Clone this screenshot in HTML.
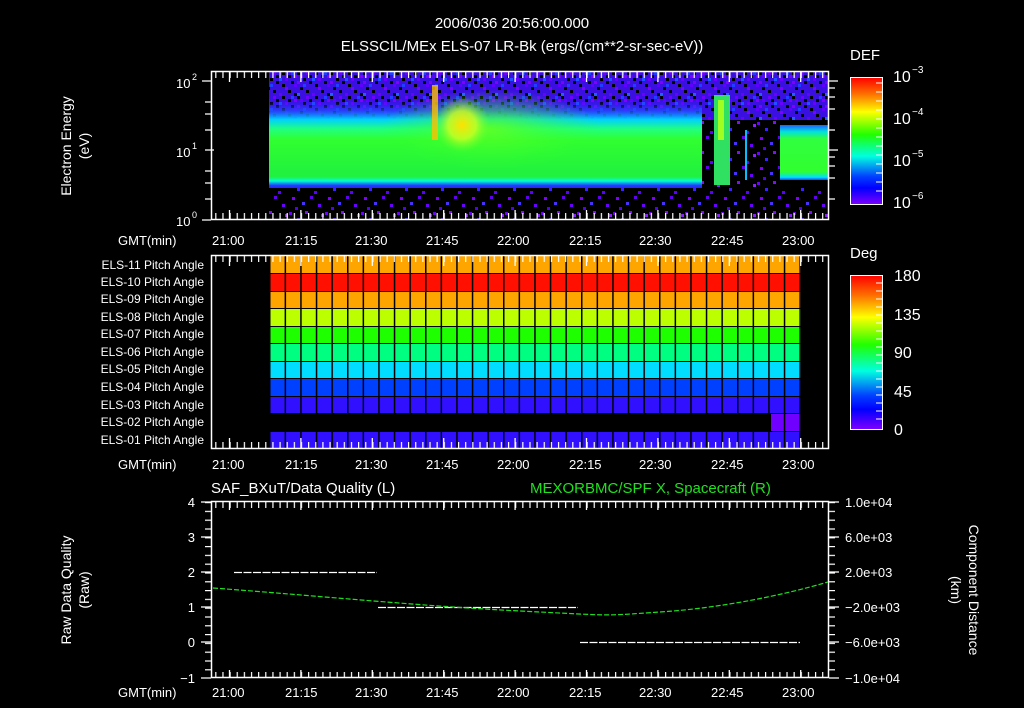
<!DOCTYPE html>
<html><head><meta charset="utf-8"><style>
html,body{margin:0;padding:0;background:#000;width:1024px;height:708px;overflow:hidden}
svg{display:block}
text{font-family:"Liberation Sans",sans-serif;fill:#fff}
</style></head><body>
<svg width="1024" height="708" viewBox="0 0 1024 708" xmlns="http://www.w3.org/2000/svg">
<defs>
<pattern id="tkx" x="229.5" y="0" width="7.14" height="708" patternUnits="userSpaceOnUse"><rect x="0" y="0" width="1.2" height="708" fill="#fff"/></pattern>
<pattern id="tky" x="0" y="502" width="20" height="8.8" patternUnits="userSpaceOnUse"><rect x="0" y="0" width="20" height="1.2" fill="#fff"/></pattern>
<pattern id="cell" x="269" y="0" width="15.6" height="20" patternUnits="userSpaceOnUse"><rect x="0" y="0" width="1.5" height="20" fill="#000"/></pattern>
<pattern id="spk" x="0" y="0" width="36" height="30" patternUnits="userSpaceOnUse">
<rect x="1" y="2" width="3" height="3" fill="#6a00ff"/><rect x="9" y="8" width="3" height="3" fill="#3c20ff"/><rect x="17" y="1" width="3" height="3" fill="#7a10ff"/><rect x="26" y="11" width="3" height="3" fill="#5a00ff"/><rect x="4" y="17" width="3" height="3" fill="#8000ff"/><rect x="14" y="22" width="3" height="3" fill="#4a30ff"/><rect x="30" y="24" width="3" height="3" fill="#6a00ff"/><rect x="22" y="16" width="3" height="3" fill="#6000ee"/><rect x="33" y="4" width="3" height="3" fill="#8a20ff"/><rect x="7" y="27" width="3" height="3" fill="#5000ff"/>
</pattern>
<pattern id="dense" x="0" y="0" width="33" height="24" patternUnits="userSpaceOnUse">
<rect width="33" height="24" fill="#3a10e0"/>
<rect x="0" y="0" width="3" height="3" fill="#000"/><rect x="9" y="0" width="3" height="3" fill="#7000ff"/><rect x="18" y="0" width="3" height="3" fill="#000"/><rect x="27" y="0" width="3" height="3" fill="#2040ff"/>
<rect x="3" y="3" width="3" height="3" fill="#6000ff"/><rect x="12" y="3" width="3" height="3" fill="#000"/><rect x="24" y="3" width="3" height="3" fill="#000"/><rect x="30" y="3" width="3" height="3" fill="#8000ff"/>
<rect x="6" y="6" width="3" height="3" fill="#000"/><rect x="15" y="6" width="3" height="3" fill="#2050ff"/><rect x="21" y="6" width="3" height="3" fill="#6a00ff"/>
<rect x="0" y="9" width="3" height="3" fill="#8000ff"/><rect x="12" y="9" width="3" height="3" fill="#000"/><rect x="27" y="9" width="3" height="3" fill="#000"/>
<rect x="6" y="12" width="3" height="3" fill="#2040ff"/><rect x="18" y="12" width="3" height="3" fill="#000"/><rect x="30" y="12" width="3" height="3" fill="#6000ff"/>
<rect x="3" y="15" width="3" height="3" fill="#000"/><rect x="21" y="15" width="3" height="3" fill="#8000ff"/><rect x="24" y="18" width="3" height="3" fill="#000"/>
<rect x="9" y="18" width="3" height="3" fill="#000"/><rect x="15" y="21" width="3" height="3" fill="#6a00ff"/><rect x="0" y="21" width="3" height="3" fill="#2060ff"/><rect x="30" y="21" width="3" height="3" fill="#000"/>
</pattern>
<linearGradient id="band" x1="0" y1="0" x2="0" y2="1">
<stop offset="0" stop-color="#3020ff" stop-opacity="0"/><stop offset="0.12" stop-color="#2050ff" stop-opacity="0.7"/><stop offset="0.22" stop-color="#00d0ff"/><stop offset="0.33" stop-color="#20ff80"/><stop offset="0.45" stop-color="#30ff30"/><stop offset="0.87" stop-color="#20f040"/><stop offset="0.92" stop-color="#00ffd0"/><stop offset="0.97" stop-color="#2040ff"/><stop offset="1" stop-color="#3020ff"/>
</linearGradient>
<linearGradient id="blk" x1="0" y1="0" x2="0" y2="1">
<stop offset="0" stop-color="#2060ff"/><stop offset="0.12" stop-color="#00e0e0"/><stop offset="0.25" stop-color="#30ff40"/><stop offset="0.85" stop-color="#30ff30"/><stop offset="0.95" stop-color="#00e0ff"/><stop offset="1" stop-color="#2040ff"/>
</linearGradient>
<radialGradient id="yel"><stop offset="0" stop-color="#ffe000"/><stop offset="0.5" stop-color="#d0ff20" stop-opacity="0.8"/><stop offset="1" stop-color="#60ff30" stop-opacity="0"/></radialGradient>
<radialGradient id="grn"><stop offset="0" stop-color="#60ff20" stop-opacity="0.9"/><stop offset="1" stop-color="#30ff30" stop-opacity="0"/></radialGradient>
<linearGradient id="cb" x1="0" y1="0" x2="0" y2="1">
<stop offset="0" stop-color="#ff0000"/><stop offset="0.13" stop-color="#ff7000"/><stop offset="0.27" stop-color="#ffff00"/><stop offset="0.45" stop-color="#20ff00"/><stop offset="0.62" stop-color="#00ffe0"/><stop offset="0.78" stop-color="#0040ff"/><stop offset="0.87" stop-color="#0000ff"/><stop offset="1" stop-color="#8000ff"/>
</linearGradient>
</defs>

<text x="512" y="28" font-size="15" text-anchor="middle">2006/036 20:56:00.000</text>
<text x="522" y="51" font-size="15" text-anchor="middle">ELSSCIL/MEx ELS-07 LR-Bk  (ergs/(cm**2-sr-sec-eV))</text>

<!-- TOP PANEL spectrogram -->
<rect x="269" y="72" width="560" height="48" fill="url(#dense)"/>
<rect x="269" y="100" width="433" height="88" fill="url(#band)"/>
<ellipse cx="490" cy="130" rx="110" ry="40" fill="url(#grn)"/>
<ellipse cx="462" cy="125" rx="28" ry="28" fill="url(#yel)"/>
<rect x="432" y="85" width="6" height="55" fill="#ffc000" opacity="0.8"/>
<rect x="702" y="120" width="78" height="68" fill="#000"/>
<rect x="702" y="120" width="78" height="68" fill="url(#spk)"/>
<rect x="714" y="95" width="16" height="90" fill="#30e060"/>
<rect x="718" y="100" width="6" height="40" fill="#a0ff20"/>
<rect x="745" y="130" width="2" height="50" fill="#00c0ff"/>
<rect x="780" y="125" width="48" height="55" fill="url(#blk)"/>
<rect x="269" y="188" width="560" height="31" fill="url(#spk)"/>
<rect x="211.5" y="71.5" width="617" height="148" fill="none" stroke="#fff" stroke-width="1.5"/>
<rect x="212" y="72" width="616" height="6" fill="url(#tkx)"/>
<rect x="212" y="213" width="616" height="6" fill="url(#tkx)"/>
<g stroke="#fff" stroke-width="1.3">
<path d="M229.5 72v10M300.9 72v10M372.3 72v10M443.7 72v10M515.1 72v10M586.5 72v10M657.9 72v10M729.3 72v10M800.7 72v10M229.5 220v-10M300.9 220v-10M372.3 220v-10M443.7 220v-10M515.1 220v-10M586.5 220v-10M657.9 220v-10M729.3 220v-10M800.7 220v-10"/>
<path d="M202 81h9M205 102h6M205 114h6M205 130h6M205 150h9M205 171h6M205 183h6M205 199h6M202 220h9M829 81h9M829 88h6M829 97h6M829 109h6M829 130h6M829 150h9M829 157h6M829 166h6M829 178h6M829 199h6"/>
</g>
<text x="176" y="88" font-size="13">10</text><text x="192" y="80" font-size="9">2</text>
<text x="176" y="157" font-size="13">10</text><text x="192" y="149" font-size="9">1</text>
<text x="176" y="226" font-size="13">10</text><text x="192" y="218" font-size="9">0</text>
<text transform="translate(71,146) rotate(-90)" font-size="14" text-anchor="middle">Electron Energy</text>
<text transform="translate(89,146) rotate(-90)" font-size="14" text-anchor="middle">(eV)</text>
<g font-size="13">
<text x="118" y="245">GMT(min)</text>
<text x="212" y="245">21:00</text><text x="285" y="245">21:15</text><text x="355" y="245">21:30</text><text x="426" y="245">21:45</text><text x="497" y="245">22:00</text><text x="569" y="245">22:15</text><text x="639" y="245">22:30</text><text x="711" y="245">22:45</text><text x="782" y="245">23:00</text>
</g>
<text x="850" y="60" font-size="15">DEF</text>
<rect x="850.5" y="77.5" width="32" height="127" fill="url(#cb)" stroke="#fff"/>
<g stroke="#fff"><path d="M876 83h6M876 92h6M876 101h6M876 110h6M876 119h6M876 128h6M876 137h6M876 146h6M876 155h6M876 164h6M876 173h6M876 182h6M876 191h6"/></g>
<g font-size="16"><text x="893" y="82">10</text><text x="912" y="73" font-size="10">−3</text>
<text x="893" y="124">10</text><text x="912" y="115" font-size="10">−4</text>
<text x="893" y="166">10</text><text x="912" y="157" font-size="10">−5</text>
<text x="893" y="208">10</text><text x="912" y="199" font-size="10">−6</text></g>

<!-- MIDDLE PANEL -->
<rect x="269" y="256" width="532" height="17" fill="#ffa500"/>
<rect x="269" y="274" width="532" height="17" fill="#ff1000"/>
<rect x="269" y="292" width="532" height="16" fill="#ffa500"/>
<rect x="269" y="309" width="532" height="17" fill="#bbff00"/>
<rect x="269" y="327" width="532" height="16" fill="#1eff00"/>
<rect x="269" y="344" width="532" height="17" fill="#00ff80"/>
<rect x="269" y="362" width="532" height="16" fill="#00ddff"/>
<rect x="269" y="379" width="532" height="17" fill="#0040ff"/>
<rect x="269" y="397" width="532" height="16" fill="#3010ff"/>
<rect x="771" y="414" width="30" height="17" fill="#7000ff"/>
<rect x="269" y="432" width="532" height="16" fill="#3010ff"/>
<rect x="269" y="256" width="532" height="192" fill="url(#cell)"/>
<rect x="211.5" y="255.5" width="617" height="193" fill="none" stroke="#fff" stroke-width="1.5"/>
<rect x="212" y="256" width="616" height="6" fill="url(#tkx)"/>
<rect x="212" y="442" width="616" height="6" fill="url(#tkx)"/>
<g stroke="#fff" stroke-width="1.3"><path d="M229.5 256v10M300.9 256v10M372.3 256v10M443.7 256v10M515.1 256v10M586.5 256v10M657.9 256v10M729.3 256v10M800.7 256v10M229.5 448v-10M300.9 448v-10M372.3 448v-10M443.7 448v-10M515.1 448v-10M586.5 448v-10M657.9 448v-10M729.3 448v-10M800.7 448v-10"/></g>
<g font-size="12" text-anchor="end">
<text x="204" y="269">ELS-11 Pitch Angle</text><text x="204" y="286">ELS-10 Pitch Angle</text><text x="204" y="303">ELS-09 Pitch Angle</text><text x="204" y="321">ELS-08 Pitch Angle</text><text x="204" y="338">ELS-07 Pitch Angle</text><text x="204" y="356">ELS-06 Pitch Angle</text><text x="204" y="373">ELS-05 Pitch Angle</text><text x="204" y="391">ELS-04 Pitch Angle</text><text x="204" y="409">ELS-03 Pitch Angle</text><text x="204" y="426">ELS-02 Pitch Angle</text><text x="204" y="444">ELS-01 Pitch Angle</text>
</g>
<g font-size="13">
<text x="118" y="469">GMT(min)</text>
<text x="212" y="469">21:00</text><text x="285" y="469">21:15</text><text x="355" y="469">21:30</text><text x="426" y="469">21:45</text><text x="497" y="469">22:00</text><text x="569" y="469">22:15</text><text x="639" y="469">22:30</text><text x="711" y="469">22:45</text><text x="782" y="469">23:00</text>
</g>
<text x="850" y="258" font-size="15">Deg</text>
<rect x="850.5" y="275.5" width="32" height="154" fill="url(#cb)" stroke="#fff"/>
<g stroke="#fff"><path d="M876 283h6M876 291h6M876 299h6M876 307h6M876 315h6M876 323h6M876 331h6M876 339h6M876 347h6M876 355h6M876 363h6M876 371h6M876 379h6M876 387h6M876 395h6M876 403h6M876 411h6M876 419h6"/></g>
<g font-size="16"><text x="894" y="281">180</text><text x="894" y="320">135</text><text x="894" y="358">90</text><text x="894" y="397">45</text><text x="894" y="435">0</text></g>

<!-- BOTTOM PANEL -->
<text x="211" y="493" font-size="15">SAF_BXuT/Data Quality (L)</text>
<text x="530" y="493" font-size="15" style="fill:#20e020">MEXORBMC/SPF X, Spacecraft (R)</text>
<rect x="211.5" y="501.5" width="617" height="176" fill="none" stroke="#fff" stroke-width="1.5"/>
<rect x="212" y="502" width="616" height="6" fill="url(#tkx)"/>
<rect x="212" y="672" width="616" height="6" fill="url(#tkx)"/>
<rect x="205" y="502" width="6" height="176" fill="url(#tky)"/>
<rect x="829" y="502" width="6" height="176" fill="url(#tky)"/>
<g stroke="#fff" stroke-width="1.3"><path d="M229.5 502v8M300.9 502v8M372.3 502v8M443.7 502v8M515.1 502v8M586.5 502v8M657.9 502v8M729.3 502v8M800.7 502v8M229.5 678v-8M300.9 678v-8M372.3 678v-8M443.7 678v-8M515.1 678v-8M586.5 678v-8M657.9 678v-8M729.3 678v-8M800.7 678v-8M201 502h10M201 537h10M201 572h10M201 607h10M201 642h10M201 678h10M829 502h10M829 537h10M829 572h10M829 607h10M829 642h10M829 678h10"/></g>
<g font-size="13" text-anchor="end"><text x="195" y="507">4</text><text x="195" y="542">3</text><text x="195" y="577">2</text><text x="195" y="612">1</text><text x="195" y="647">0</text><text x="195" y="683">−1</text></g>
<g font-size="13"><text x="845" y="507">1.0e+04</text><text x="845" y="542">6.0e+03</text><text x="845" y="577">2.0e+03</text><text x="845" y="612">−2.0e+03</text><text x="845" y="647">−6.0e+03</text><text x="845" y="683">−1.0e+04</text></g>
<text transform="translate(71,590) rotate(-90)" font-size="14" text-anchor="middle">Raw Data Quality</text>
<text transform="translate(89,590) rotate(-90)" font-size="14" text-anchor="middle">(Raw)</text>
<text transform="translate(969,590) rotate(90)" font-size="14" text-anchor="middle">Component Distance</text>
<text transform="translate(951,590) rotate(90)" font-size="14" text-anchor="middle">(km)</text>
<g stroke="#fff" stroke-width="1.2" stroke-dasharray="8 1.5" fill="none"><path d="M234 572.5H377M378 607.5H578M580 642.5H800"/></g>
<path d="M213 588 C 320 596, 420 606, 520 611 S 600 616, 660 612 S 780 596, 828 582" fill="none" stroke="#20e020" stroke-width="1.2" stroke-dasharray="5 2"/>
<g font-size="13">
<text x="118" y="697">GMT(min)</text>
<text x="212" y="697">21:00</text><text x="285" y="697">21:15</text><text x="355" y="697">21:30</text><text x="426" y="697">21:45</text><text x="497" y="697">22:00</text><text x="569" y="697">22:15</text><text x="639" y="697">22:30</text><text x="711" y="697">22:45</text><text x="782" y="697">23:00</text>
</g>
</svg>
</body></html>
